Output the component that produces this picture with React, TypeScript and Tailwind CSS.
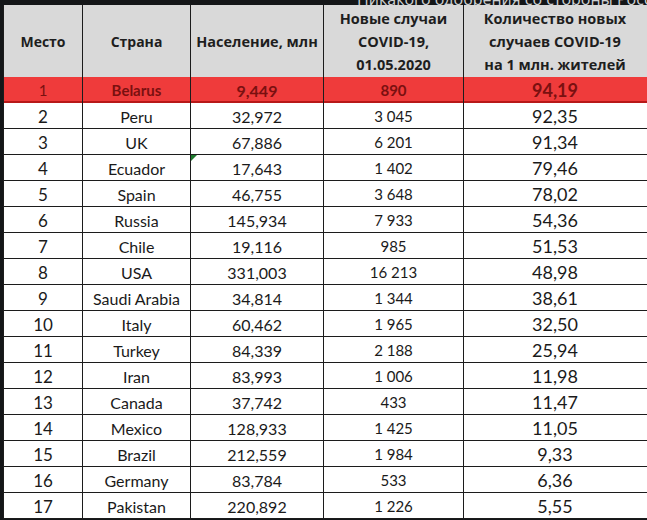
const rows = [
  ["2", "Peru", "32,972", "3 045", "92,35"],
  ["3", "UK", "67,886", "6 201", "91,34"],
  ["4", "Ecuador", "17,643", "1 402", "79,46"],
  ["5", "Spain", "46,755", "3 648", "78,02"],
  ["6", "Russia", "145,934", "7 933", "54,36"],
  ["7", "Chile", "19,116", "985", "51,53"],
  ["8", "USA", "331,003", "16 213", "48,98"],
  ["9", "Saudi Arabia", "34,814", "1 344", "38,61"],
  ["10", "Italy", "60,462", "1 965", "32,50"],
  ["11", "Turkey", "84,339", "2 188", "25,94"],
  ["12", "Iran", "83,993", "1 006", "11,98"],
  ["13", "Canada", "37,742", "433", "11,47"],
  ["14", "Mexico", "128,933", "1 425", "11,05"],
  ["15", "Brazil", "212,559", "1 984", "9,33"],
  ["16", "Germany", "83,784", "533", "6,36"],
  ["17", "Pakistan", "220,892", "1 226", "5,55"],
];

const cols = "grid grid-cols-[79px_108px_133px_140px_182px]";
const cell = "flex items-center justify-center border-r border-[#1c1c1c]";

export default function App() {
  return (
    <div className="w-[647px] h-[520px] overflow-hidden bg-[#141618]">
      {/* clipped caption from the page above */}
      <div className="h-[5px] overflow-hidden">
        <div className="-mt-[13px] pl-[357px] whitespace-nowrap text-[16px] text-[#cfd2d4] font-['Open_Sans',sans-serif]">
          Никакого одобрения со стороны России, сел
        </div>
      </div>

      <div className="ml-[3px] w-[644px] bg-white border-l border-[#1c1c1c] font-['Lato','Open_Sans',sans-serif] text-[#1a1a1a]">
        {/* header */}
        <div className={`${cols} h-[72px] bg-[#d9d9d9] font-['Open_Sans',sans-serif] font-bold text-[14px] leading-[23px] text-[#1e1e1e]`}>
          <div className={cell}>Место</div>
          <div className={cell}>Страна</div>
          <div className={`${cell} text-[14.5px] whitespace-nowrap`}>Население, млн</div>
          <div className={`${cell} flex-col text-[14.5px]`}>
            <span>Новые случаи</span>
            <span>COVID-19,</span>
            <span>01.05.2020</span>
          </div>
          <div className="flex flex-col items-center justify-center text-[14.5px]">
            <span>Количество новых</span>
            <span>случаев COVID-19</span>
            <span>на 1 млн. жителей</span>
          </div>
        </div>

        {/* highlighted row */}
        <div className={`${cols} h-[26px] bg-[#ef3b3b] border-b-2 border-[#b81818] text-[#7a1010]`}>
          <div className={`${cell} text-[15px]`}>1</div>
          <div className={`${cell} text-[15px] font-bold`}>Belarus</div>
          <div className={`${cell} text-[16px] font-bold`}>9,449</div>
          <div className={`${cell} text-[15px] font-bold`}>890</div>
          <div className="flex items-center justify-center text-[18px] font-bold">94,19</div>
        </div>

        {rows.map((r, i) => (
          <div key={i} className={`${cols} h-[26px] border-b border-[#1c1c1c] text-[16px]`}>
            <div className={`${cell} text-[17px]`}>{r[0]}</div>
            <div className={`${cell} text-[16px]`}>{r[1]}</div>
            <div className={`${cell} relative text-[16px]`}>
              {r[1] === "Ecuador" && (
                <span className="absolute left-0 top-0 w-0 h-0 border-t-[6px] border-r-[6px] border-t-[#1e7a2e] border-r-transparent" />
              )}
              {r[2]}
            </div>
            <div className={`${cell} text-[15px]`}>{r[3]}</div>
            <div className="flex items-center justify-center text-[18px]">{r[4]}</div>
          </div>
        ))}
      </div>
    </div>
  );
}
